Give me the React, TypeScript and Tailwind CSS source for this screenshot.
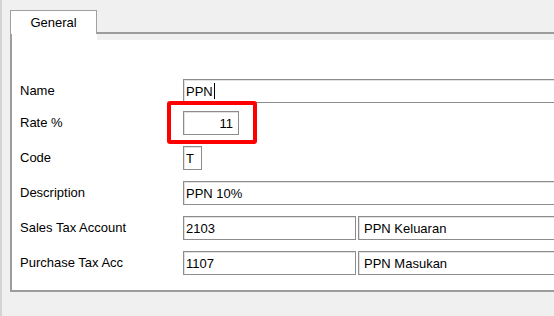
import React from 'react'

const box = 'h-[24px] border border-[#8c8c8c] bg-white shadow-[inset_1px_1px_0_#e2e2e2] flex items-center px-[2px] text-[13px] leading-none whitespace-nowrap overflow-hidden'

function Row({ label, mt, children }: { label: string; mt: string; children: React.ReactNode }) {
  return (
    <div className={`flex items-center ${mt}`}>
      <div className="w-[163px] shrink-0 text-[13px]">{label}</div>
      {children}
    </div>
  )
}

export default function App() {
  return (
    <div
      className="w-[554px] h-[316px] bg-[#f0f0f0] overflow-hidden border-l-2 border-[#d4d4d4] text-black"
      style={{ fontFamily: '"Liberation Sans", Arial, sans-serif' }}
    >
      <div className="pl-[8px] pt-[10px]">
        {/* Tab strip */}
        <div className="flex">
          <div className="w-[87px] h-[24px] border border-b-0 border-[#a0a0a0] bg-white flex items-center justify-center text-[13px]">
            General
          </div>
          <div className="flex-1 h-[24px] border-b-2 border-[#9c9c9c]" />
        </div>
        <div className="flex h-[6px]">
          <div className="w-[87px] bg-white border-l-2 border-[#a0a0a0]" />
          <div className="flex-1" />
        </div>

        {/* Page */}
        <div className="w-[700px] h-[252px] bg-white border-l-2 border-b-2 border-[#9c9c9c] pl-[8px] pt-[39px]">
          <Row label="Name" mt="mt-0">
            <div className={`${box} w-[420px]`}>
              PPN<span className="inline-block w-px h-[16px] bg-black ml-px" />
            </div>
          </Row>
          <Row label="Rate %" mt="mt-[8px]">
            <div className="relative">
              <div className={`${box} w-[56px] justify-end pr-[5px]`}>11</div>
              <div className="absolute left-[-16px] top-[-10px] w-[90px] h-[43px] border-4 border-[#ff0000] rounded-[3px]" />
            </div>
          </Row>
          <Row label="Code" mt="mt-[11px]">
            <div className={`${box} w-[19px]`}>T</div>
          </Row>
          <Row label="Description" mt="mt-[11px]">
            <div className={`${box} w-[420px]`}>PPN 10%</div>
          </Row>
          <Row label="Sales Tax Account" mt="mt-[11px]">
            <div className={`${box} w-[173px]`}>2103</div>
            <div className={`${box} w-[240px] ml-[2px] pl-[5px]`}>PPN Keluaran</div>
          </Row>
          <Row label="Purchase Tax Acc" mt="mt-[11px]">
            <div className={`${box} w-[173px]`}>1107</div>
            <div className={`${box} w-[240px] ml-[2px] pl-[5px]`}>PPN Masukan</div>
          </Row>
        </div>
      </div>
    </div>
  )
}
